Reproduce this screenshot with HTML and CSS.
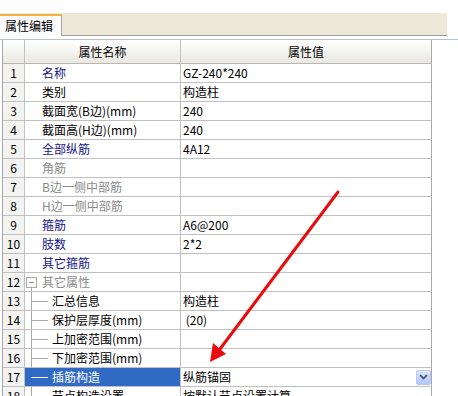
FILE: index.html
```html
<!DOCTYPE html>
<html lang="zh-CN">
<head>
<meta charset="utf-8">
<title>属性编辑</title>
<link rel="stylesheet" href="styles.css">
</head>
<body>
<div class="tabbar">
  <div class="tab">属性编辑</div>
</div>
<div class="panel">
  <div class="grid">
    <div class="row head"><div class="num"></div><div class="hname">属性名称</div><div class="hval">属性值</div></div>
    <div class="row"><div class="num">1</div><div class="name blue">名称</div><div class="val mono">GZ-240*240</div></div>
    <div class="row"><div class="num">2</div><div class="name">类别</div><div class="val">构造柱</div></div>
    <div class="row"><div class="num">3</div><div class="name">截面宽(B边)(mm)</div><div class="val mono">240</div></div>
    <div class="row"><div class="num">4</div><div class="name">截面高(H边)(mm)</div><div class="val mono">240</div></div>
    <div class="row"><div class="num">5</div><div class="name blue">全部纵筋</div><div class="val mono">4A12</div></div>
    <div class="row"><div class="num">6</div><div class="name gray">角筋</div><div class="val"></div></div>
    <div class="row"><div class="num">7</div><div class="name gray">B边一侧中部筋</div><div class="val"></div></div>
    <div class="row"><div class="num">8</div><div class="name gray">H边一侧中部筋</div><div class="val"></div></div>
    <div class="row"><div class="num">9</div><div class="name blue">箍筋</div><div class="val mono">A6@200</div></div>
    <div class="row"><div class="num">10</div><div class="name blue">肢数</div><div class="val mono">2*2</div></div>
    <div class="row"><div class="num">11</div><div class="name blue">其它箍筋</div><div class="val"></div></div>
    <div class="row"><div class="num">12</div><div class="name tree gray"><svg class="g-root" width="17" height="19" viewBox="0 0 17 19"><rect x="1.5" y="4.5" width="10" height="10" fill="#fff" stroke="#a8a8a8"/><line x1="4" y1="9.5" x2="9" y2="9.5" stroke="#909090"/><line x1="6.5" y1="15" x2="6.5" y2="19" stroke="#a8a8a8"/></svg>其它属性</div><div class="val"></div></div>
    <div class="row"><div class="num">13</div><div class="name tree"><svg class="g-child" width="27" height="19" viewBox="0 0 27 19"><line x1="6.5" y1="0" x2="6.5" y2="19" stroke="#a8a8a8"/><line x1="6.5" y1="9.5" x2="23" y2="9.5" stroke="#a8a8a8"/></svg>汇总信息</div><div class="val">构造柱</div></div>
    <div class="row"><div class="num">14</div><div class="name tree"><svg class="g-child" width="27" height="19" viewBox="0 0 27 19"><line x1="6.5" y1="0" x2="6.5" y2="19" stroke="#a8a8a8"/><line x1="6.5" y1="9.5" x2="23" y2="9.5" stroke="#a8a8a8"/></svg>保护层厚度(mm)</div><div class="val mono">&nbsp;(20)</div></div>
    <div class="row"><div class="num">15</div><div class="name tree"><svg class="g-child" width="27" height="19" viewBox="0 0 27 19"><line x1="6.5" y1="0" x2="6.5" y2="19" stroke="#a8a8a8"/><line x1="6.5" y1="9.5" x2="23" y2="9.5" stroke="#a8a8a8"/></svg>上加密范围(mm)</div><div class="val"></div></div>
    <div class="row"><div class="num">16</div><div class="name tree"><svg class="g-child" width="27" height="19" viewBox="0 0 27 19"><line x1="6.5" y1="0" x2="6.5" y2="19" stroke="#a8a8a8"/><line x1="6.5" y1="9.5" x2="23" y2="9.5" stroke="#a8a8a8"/></svg>下加密范围(mm)</div><div class="val"></div></div>
    <div class="row"><div class="num">17</div><div class="name tree selected"><svg class="g-child" width="27" height="19" viewBox="0 0 27 19"><line x1="6.5" y1="9.5" x2="23" y2="9.5" stroke="#ffffff"/></svg>插筋构造</div><div class="val combo"><span>纵筋锚固</span><span class="drop"><svg width="9" height="6" viewBox="0 0 9 6"><path d="M1 1 L4.5 4.5 L8 1" fill="none" stroke="#4d6185" stroke-width="1.8"/></svg></span></div></div>
    <div class="row"><div class="num">18</div><div class="name tree"><svg class="g-child" width="27" height="19" viewBox="0 0 27 19"><line x1="6.5" y1="0" x2="6.5" y2="19" stroke="#a8a8a8"/><line x1="6.5" y1="9.5" x2="23" y2="9.5" stroke="#a8a8a8"/></svg>节点构造设置</div><div class="val">按默认节点设置计算</div></div>
  </div>
</div>
<svg class="arrow" width="458" height="396" viewBox="0 0 458 396">
  <line x1="338" y1="192" x2="220" y2="349" stroke="#e80c0c" stroke-width="3" stroke-linecap="round"/>
  <polygon points="210,362 226,354 213,343" fill="#e80c0c"/>
</svg>
</body>
</html>
```

FILE: styles.css
```css
html, body {
  margin: 0;
  padding: 0;
}
body {
  width: 458px;
  height: 396px;
  overflow: hidden;
  background: #ffffff;
  position: relative;
  font-family: "Noto Sans CJK SC", "Noto Sans", sans-serif;
  font-size: 12px;
  color: #000000;
}
.tabbar {
  margin-top: 13px;
  width: 447px;
  height: 23px;
  box-sizing: border-box;
  background: #ece9d8;
  border-bottom: 1px solid #9c9c9c;
  display: flex;
  align-items: flex-end;
}
.tab {
  width: 62px;
  height: 22px;
  margin-bottom: -1px;
  box-sizing: border-box;
  background: #fcfcfe;
  border-top: 2px solid #f2b23c;
  border-right: 1px solid #a6a6a6;
  padding-left: 5px;
  line-height: 19px;
  font-size: 12px;
  color: #000;
}
.panel {
  margin-top: 3px;
  border-top: 1px solid #b9c2cc;
}
.grid {
  margin-left: 2px;
  width: 430px;
  border-left: 1px solid #a8a8a8;
}
.row {
  display: grid;
  grid-template-columns: 22px 156px 251px;
  height: 19px;
}
.row > div {
  box-sizing: border-box;
  border-right: 1px solid #c0c0c0;
  border-bottom: 1px solid #c0c0c0;
  line-height: 18px;
  white-space: nowrap;
  overflow: hidden;
}
.row > div:last-child {
  border-right-color: #a8a8a8;
}
.row.head {
  height: 24px;
}
.row.head > div {
  background: linear-gradient(#ffffff, #f3f3ef 55%, #e9e8e2);
  border-bottom-color: #b8b8b0;
  line-height: 23px;
  text-align: center;
}
.num {
  background: #f3f3f1;
  text-align: center;
  color: #000;
}
.name {
  padding-left: 17px;
}
.name.tree {
  padding-left: 0;
  display: flex;
  align-items: center;
}
.name svg {
  flex: none;
  display: block;
}
.blue {
  color: #14148a;
}
.gray {
  color: #8a8a8a;
}
.selected {
  background: #316ac5;
  color: #ffffff;
}
.val {
  padding-left: 2px;
}
.mono {
  font-family: "Noto Sans CJK SC", "Noto Sans", sans-serif;
}
.combo {
  display: flex;
  align-items: center;
  justify-content: space-between;
}
.drop {
  width: 15px;
  height: 15px;
  box-sizing: border-box;
  border: 1px solid #b5c8f4;
  border-radius: 2px;
  background: linear-gradient(#dfe8fe, #c2d3fb 60%, #b5c8f6);
  display: flex;
  align-items: center;
  justify-content: center;
}
.drop svg {
  display: block;
}
.arrow {
  position: absolute;
  left: 0;
  top: 0;
  pointer-events: none;
}
```
